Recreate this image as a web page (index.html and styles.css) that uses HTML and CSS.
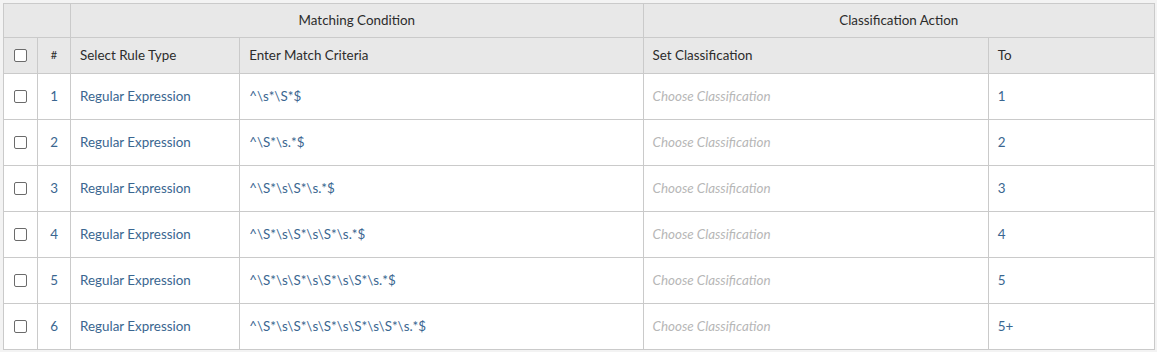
FILE: index.html
```html
<!DOCTYPE html>
<html lang="en">
<head>
  <meta charset="UTF-8">
  <title>Classification Rules</title>
  <link rel="stylesheet" href="styles.css">
</head>
<body>

<table class="rules">
  <colgroup>
    <col class="c-check">
    <col class="c-num">
    <col class="c-type">
    <col class="c-criteria">
    <col class="c-class">
    <col class="c-to">
  </colgroup>
  <thead>
    <tr class="group-row">
      <th colspan="2"></th>
      <th colspan="2" class="center">Matching Condition</th>
      <th colspan="2" class="center">Classification Action</th>
    </tr>
    <tr class="head-row">
      <th class="center"><span class="box"></span></th>
      <th class="center small">#</th>
      <th>Select Rule Type</th>
      <th>Enter Match Criteria</th>
      <th>Set Classification</th>
      <th>To</th>
    </tr>
  </thead>
  <tbody>
    <tr>
      <td class="center"><span class="box"></span></td>
      <td class="center link">1</td>
      <td class="link">Regular Expression</td>
      <td class="link">^\s*\S*$</td>
      <td class="placeholder">Choose Classification</td>
      <td class="link">1</td>
    </tr>
    <tr>
      <td class="center"><span class="box"></span></td>
      <td class="center link">2</td>
      <td class="link">Regular Expression</td>
      <td class="link">^\S*\s.*$</td>
      <td class="placeholder">Choose Classification</td>
      <td class="link">2</td>
    </tr>
    <tr>
      <td class="center"><span class="box"></span></td>
      <td class="center link">3</td>
      <td class="link">Regular Expression</td>
      <td class="link">^\S*\s\S*\s.*$</td>
      <td class="placeholder">Choose Classification</td>
      <td class="link">3</td>
    </tr>
    <tr>
      <td class="center"><span class="box"></span></td>
      <td class="center link">4</td>
      <td class="link">Regular Expression</td>
      <td class="link">^\S*\s\S*\s\S*\s.*$</td>
      <td class="placeholder">Choose Classification</td>
      <td class="link">4</td>
    </tr>
    <tr>
      <td class="center"><span class="box"></span></td>
      <td class="center link">5</td>
      <td class="link">Regular Expression</td>
      <td class="link">^\S*\s\S*\s\S*\s\S*\s.*$</td>
      <td class="placeholder">Choose Classification</td>
      <td class="link">5</td>
    </tr>
    <tr>
      <td class="center"><span class="box"></span></td>
      <td class="center link">6</td>
      <td class="link">Regular Expression</td>
      <td class="link">^\S*\s\S*\s\S*\s\S*\s\S*\s.*$</td>
      <td class="placeholder">Choose Classification</td>
      <td class="link">5+</td>
    </tr>
  </tbody>
</table>

</body>
</html>
```

FILE: styles.css
```css
html, body {
  margin: 0;
  background: #f3f3f3;
  font-family: Lato, 'Liberation Sans', sans-serif;
  font-size: 13.4px;
  color: #333;
}
body {
  padding: 3px;
}
.rules {
  border-collapse: collapse;
  width: 1152px;
  table-layout: fixed;
  background: #fff;
}
.c-check { width: 34px; }
.c-num { width: 33px; }
.c-type { width: 169px; }
.c-criteria { width: 403px; }
.c-class { width: 345px; }
.c-to { width: 166px; }
th, td {
  border: 1px solid #cacaca;
  padding: 0 9px 2px;
  text-align: left;
  font-weight: normal;
}
thead th {
  background: #e8e8e8;
  color: #2c2c2c;
}
.group-row th {
  height: 31px;
}
.head-row th {
  height: 33px;
}
tbody td {
  height: 43px;
}
.center {
  text-align: center;
  padding: 0 0 2px;
}
.small {
  font-size: 11px;
}
.link {
  color: #3a6690;
}
.placeholder {
  color: #b7b7b7;
  font-style: italic;
}
.box {
  display: inline-block;
  width: 11px;
  height: 11px;
  border: 1px solid #6b6b6b;
  border-radius: 2px;
  background: #fff;
  vertical-align: middle;
  position: relative;
  top: -1px;
}
```
